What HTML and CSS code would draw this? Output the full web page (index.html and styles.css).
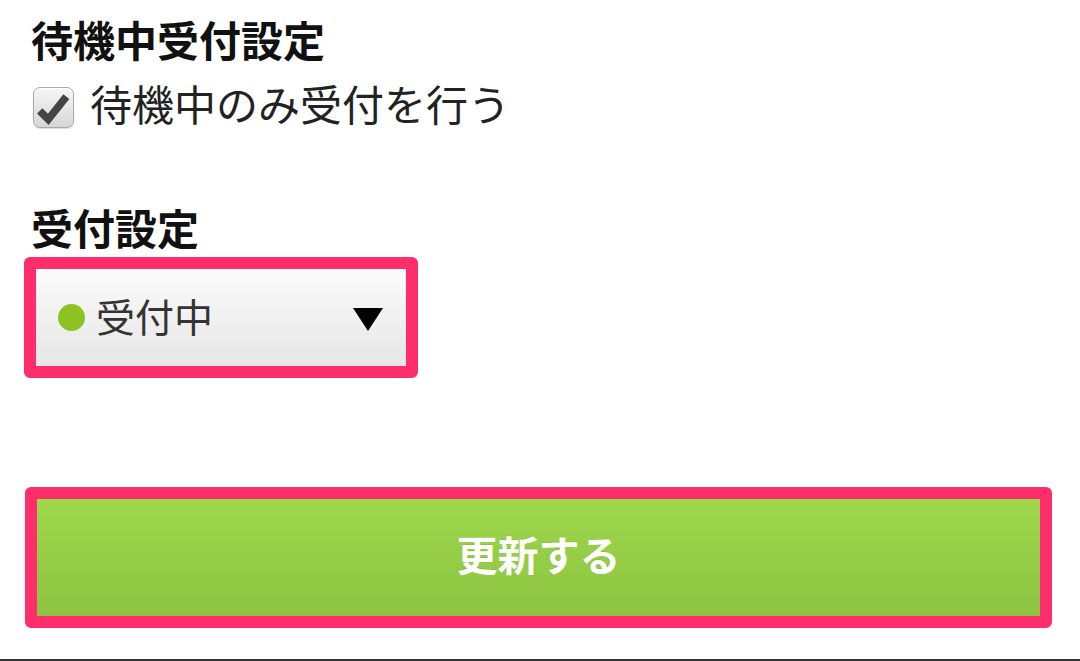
FILE: index.html
```html
<!DOCTYPE html>
<html lang="ja">
<head>
<meta charset="utf-8">
<link rel="stylesheet" href="styles.css">
</head>
<body>
<div class="page">
  <h2 class="title title-first">待機中受付設定</h2>
  <label class="check-row">
    <span class="checkbox">
      <svg viewBox="0 0 41 41" width="41" height="41"><path d="M6 24 L15 33 L34 9" fill="none" stroke="#444" stroke-width="8" stroke-linejoin="miter" stroke-linecap="butt"/></svg>
    </span>
    <span class="check-label">待機中のみ受付を行う</span>
  </label>

  <h2 class="title title-second">受付設定</h2>
  <div class="select">
    <span class="dot"></span>
    <span class="select-text">受付中</span>
    <span class="arrow"></span>
  </div>

  <button class="submit">更新する</button>
  <div class="bottom-line"></div>
</div>
</body>
</html>
```

FILE: styles.css
```css
html, body {
  margin: 0;
  padding: 0;
  background: #ffffff;
}
body {
  font-family: "Noto Sans CJK JP", "Noto Sans", sans-serif;
  color: #111;
  width: 1080px;
  height: 661px;
  overflow: hidden;
}
.page {
  padding-top: 15px;
  display: flex;
  flex-direction: column;
  align-items: flex-start;
}
.title {
  margin: 0 0 0 31px;
  font-size: 42px;
  line-height: 48px;
  font-weight: 700;
  color: #111;
}
.title-second {
  margin-top: 72px;
}
.check-row {
  margin-top: 20px;
  margin-left: 33px;
  height: 48px;
  display: flex;
  align-items: center;
}
.checkbox {
  width: 41px;
  height: 41px;
  box-sizing: border-box;
  border: 1px solid #a9a9a9;
  border-radius: 7px;
  background: linear-gradient(#f6f6f6, #d6d6d6);
  box-shadow: inset 0 1px 1px #fff, 0 1px 1px rgba(0,0,0,0.15);
  display: flex;
  align-items: center;
  justify-content: center;
  overflow: hidden;
}
.checkbox svg {
  width: 39px;
  height: 39px;
  flex: none;
}
.check-label {
  margin-left: 16px;
  font-size: 42px;
  line-height: 48px;
  padding-bottom: 8px;
  font-weight: 400;
  color: #222;
}
.select {
  margin-top: 6px;
  margin-left: 24px;
  width: 394px;
  height: 121px;
  box-sizing: border-box;
  border: 12px solid #fe2d6c;
  border-radius: 6px;
  background: linear-gradient(#fbfbfb, #e6e6e6);
  display: flex;
  align-items: center;
  padding: 0 23px 0 22px;
}
.dot {
  width: 27px;
  height: 27px;
  border-radius: 50%;
  background: #8cc320;
  flex: none;
}
.select-text {
  margin-left: 11px;
  font-size: 39px;
  line-height: 48px;
  padding-bottom: 6px;
  color: #333;
  flex: 1;
}
.arrow {
  width: 0;
  height: 0;
  border-left: 15px solid transparent;
  border-right: 15px solid transparent;
  border-top: 23px solid #000;
  margin-top: 4px;
}
.submit {
  margin-top: 109px;
  margin-left: 25px;
  width: 1027px;
  height: 141px;
  box-sizing: border-box;
  border: 12px solid #fe2d6c;
  border-radius: 6px;
  background: linear-gradient(#9ed84a, #8cc342);
  color: #fff;
  font-family: "Noto Sans CJK JP", "Noto Sans", sans-serif;
  font-size: 41px;
  font-weight: 700;
  line-height: 48px;
  padding: 0 0 10px 0;
  text-shadow: 0 -1px 0 rgba(0,0,0,0.08);
  display: flex;
  align-items: center;
  justify-content: center;
}
.bottom-line {
  margin-top: 31px;
  width: 100%;
  height: 2px;
  background: #333;
}
```
